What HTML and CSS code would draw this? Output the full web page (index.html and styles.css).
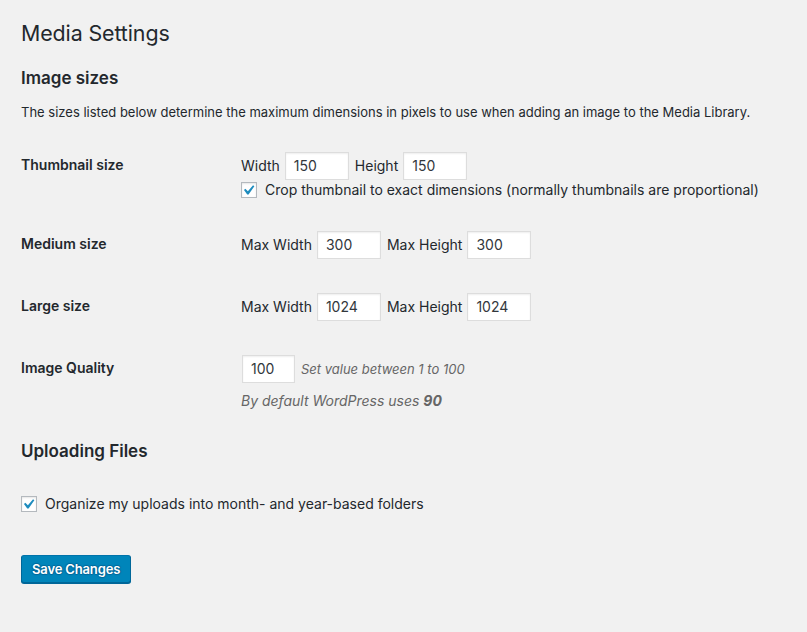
FILE: index.html
```html
<!DOCTYPE html>
<html lang="en">
<head>
<meta charset="utf-8">
<title>Media Settings</title>
<link rel="stylesheet" href="styles.css">
</head>
<body>
<div class="wrap">
  <h1 class="page-title">Media Settings</h1>
  <h2 class="section-title">Image sizes</h2>
  <p class="intro">The sizes listed below determine the maximum dimensions in pixels to use when adding an image to the Media Library.</p>

  <div class="form-table">
    <div class="row row-thumb">
      <div class="th">Thumbnail size</div>
      <div class="td">
        <div class="fields">
          <span class="lbl">Width</span><span class="input w64">150</span>
          <span class="lbl">Height</span><span class="input w64">150</span>
        </div>
        <div class="check-line">
          <span class="checkbox"><svg width="16" height="16" viewBox="2.8 1.6 16 16"><path d="M14.83 4.89l1.34.94-5.81 8.38H9.02L5.78 9.67l1.34-1.25 2.57 2.4z" fill="#1e8cbe"/></svg></span>
          <span class="check-text">Crop thumbnail to exact dimensions (normally thumbnails are proportional)</span>
        </div>
      </div>
    </div>

    <div class="row row-medium">
      <div class="th">Medium size</div>
      <div class="td">
        <div class="fields">
          <span class="lbl">Max Width</span><span class="input w64">300</span>
          <span class="lbl">Max Height</span><span class="input w64">300</span>
        </div>
      </div>
    </div>

    <div class="row row-large">
      <div class="th">Large size</div>
      <div class="td">
        <div class="fields">
          <span class="lbl">Max Width</span><span class="input w64">1024</span>
          <span class="lbl">Max Height</span><span class="input w64">1024</span>
        </div>
      </div>
    </div>

    <div class="row row-quality">
      <div class="th">Image Quality</div>
      <div class="td td-quality">
        <div class="fields">
          <span class="input w52">100</span>
          <span class="desc desc-inline">Set value between 1 to 100</span>
        </div>
        <p class="desc desc-block">By default WordPress uses <strong>90</strong></p>
      </div>
    </div>
  </div>

  <h2 class="section-title upload-title">Uploading Files</h2>

  <div class="check-line organize">
    <span class="checkbox"><svg width="16" height="16" viewBox="2.8 1.6 16 16"><path d="M14.83 4.89l1.34.94-5.81 8.38H9.02L5.78 9.67l1.34-1.25 2.57 2.4z" fill="#1e8cbe"/></svg></span>
    <span class="check-text">Organize my uploads into month- and year-based folders</span>
  </div>

  <div class="submit">
    <span class="button-primary">Save Changes</span>
  </div>
</div>
</body>
</html>
```

FILE: styles.css
```css
html, body {
  margin: 0;
  padding: 0;
  background: #f1f1f1;
}
body {
  font-family: Inter, "Noto Sans", "Liberation Sans", sans-serif;
  font-size: 13px;
  line-height: 1.4;
  color: #444;
  width: 807px;
  height: 632px;
  overflow: hidden;
}
.wrap {
  padding: 0 0 0 21px;
}
.page-title {
  margin: 0;
  padding-top: 19px;
  font-size: 21.4px;
  font-weight: 400;
  line-height: 29px;
  color: #23282d;
  letter-spacing: -0.1px;
}
.section-title {
  margin: 0;
  font-size: 17px;
  font-weight: 600;
  line-height: 22px;
  color: #23282d;
}
.wrap > .section-title { margin-top: 19px; }
.intro {
  margin: 14px 0 0;
  line-height: 19px;
  color: #23282d;
  letter-spacing: 0;
}
.form-table {
  margin-top: 15px;
  font-size: 14px;
}
.row {
  display: grid;
  grid-template-columns: 220px 1fr;
  box-sizing: border-box;
}
.row-thumb { height: 79px; }
.row-medium { height: 62px; }
.row-large { height: 62px; }
.row-quality { height: 83px; }
.th {
  padding-top: 19px;
  font-weight: 600;
  line-height: 17px;
  color: #23282d;
}
.td {
  padding-top: 15px;
}
.fields {
  display: flex;
  align-items: center;
  height: 28px;
}
.lbl {
  margin-right: 5px;
  color: #23282d;
}
.input {
  box-sizing: border-box;
  height: 28px;
  background: #fff;
  border: 1px solid #ddd;
  box-shadow: inset 0 1px 2px rgba(0,0,0,.07);
  padding: 0 8px;
  line-height: 26px;
  color: #32373c;
  margin-right: 6px;
}
.w64 { width: 64px; }
.w52 { width: 53px; margin-left: 1px; }
.desc {
  font-style: italic;
  color: #666;
}
.desc-inline {
  font-size: 13px;
}
.desc-block {
  margin: 8px 0 0;
  line-height: 19px;
}
.desc-block strong {
  font-weight: 700;
}
.check-line {
  display: flex;
  align-items: center;
  margin-top: 0;
  font-size: 14px;
}
.checkbox {
  box-sizing: border-box;
  width: 16px;
  height: 16px;
  border: 1px solid #b4b9be;
  background: #fff;
  box-shadow: inset 0 1px 2px rgba(0,0,0,.1);
  display: inline-flex;
  margin-right: 8px;
  flex: none;
}
.checkbox svg {
  display: block;
  margin: -1px;
}
.check-text {
  color: #23282d;
  line-height: 19px;
}
.upload-title.section-title {
  margin-top: 17px;
}
.organize {
  margin-top: 32px;
}
.submit {
  margin-top: 42px;
}
.button-primary {
  display: inline-flex;
  align-items: center;
  box-sizing: border-box;
  height: 28px;
  padding: 0 10px;
  background: #0085ba;
  border: 1px solid #0073aa;
  border-color: #0073aa #006799 #006799;
  border-radius: 3px;
  box-shadow: 0 1px 0 #006799;
  color: #fff;
  font-weight: 600;
  letter-spacing: -0.15px;
  text-shadow: 0 -1px 1px #006799, 1px 0 1px #006799, 0 1px 1px #006799, -1px 0 1px #006799;
}
```
